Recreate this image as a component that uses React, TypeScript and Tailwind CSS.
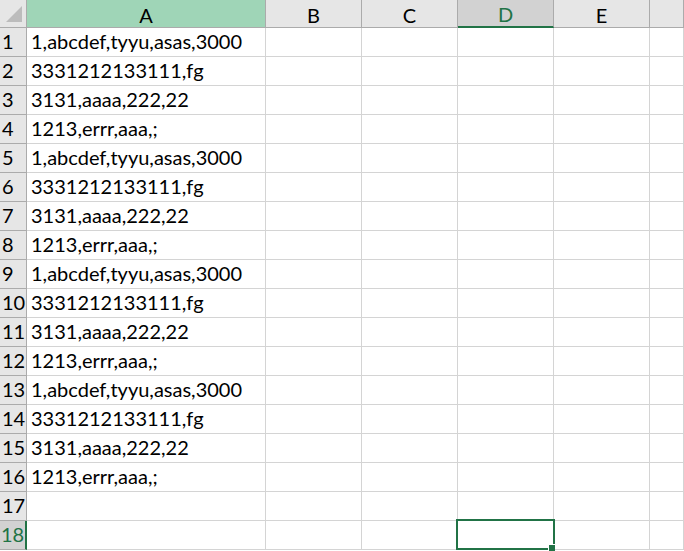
import React from "react";

const lines = ["1,abcdef,tyyu,asas,3000", "3331212133111,fg", "3131,aaaa,222,22", "1213,errr,aaa,;"];
const rows: string[] = [];
for (let i = 0; i < 16; i++) rows.push(lines[i % 4]);
rows.push("", "");

const cols = ["B", "C", "D", "E", ""];

export default function App() {
    return (
        <div className="w-[684px] h-[551px] overflow-hidden bg-white text-black" style={{ fontFamily: "Lato, 'Open Sans', sans-serif" }}>
            <div className="grid grid-cols-[27px_239px_96px_96px_96px_96px_1fr] grid-rows-[28px] auto-rows-[29px]">
                {/* header row */}
                <div className="relative bg-[#e6e6e6] border-r border-b border-[#ababab]">
                    <svg className="absolute left-[6px] top-[6px]" width="16" height="16" viewBox="0 0 16 16">
                        <polygon points="16,0 16,16 0,16" fill="#bcbcbc" />
                    </svg>
                </div>
                <div className="bg-[#9fd5b7] border-r border-b border-[#ababab] flex items-center justify-center text-[20px] pt-[2px]">A</div>
                {cols.map((c) =>
                    c === "D" ? (
                        <div key={c} className="bg-[#d2d2d2] border-r border-[#ababab] border-b-2 border-b-[#217346] flex items-center justify-center text-[20px] text-[#217346] pt-[2px]">
                            {c}
                        </div>
                    ) : (
                        <div key={c || "f"} className="bg-[#e6e6e6] border-r border-b border-[#ababab] flex items-center justify-center text-[20px] pt-[2px]">
                            {c}
                        </div>
                    )
                )}
                {rows.map((txt, i) => {
                    const n = i + 1;
                    const sel = n === 18;
                    return (
                        <React.Fragment key={n}>
                            <div
                                className={
                                    sel
                                        ? "bg-[#d2d2d2] border-r-2 border-r-[#217346] border-b border-b-[#ababab] text-[#217346] text-[20px] leading-none flex items-end pl-[1px] pb-[5px]"
                                        : "bg-[#e6e6e6] border-r border-b border-[#ababab] text-[20px] leading-none flex items-end pl-[2px] pb-[5px]"
                                }
                            >
                                {n}
                            </div>
                            <div className="border-r border-b border-[#d4d4d4] text-[20px] leading-none flex items-end pl-[4px] pb-[5px] whitespace-nowrap">{txt}</div>
                            {cols.map((c) => (
                                <div key={c || "f"} className={sel && c === "D" ? "relative z-10 border-r border-b border-[#d4d4d4]" : "border-r border-b border-[#d4d4d4]"}>
                                    {sel && c === "D" && (
                                        <div className="absolute -left-[2px] -top-[2px] -right-[2px] -bottom-[1px] border-2 border-[#217346]">
                                            <div className="absolute -right-[2px] -bottom-[3px] w-[7px] h-[7px] bg-[#217346] border-l border-t border-white" />
                                        </div>
                                    )}
                                </div>
                            ))}
                        </React.Fragment>
                    );
                })}
            </div>
        </div>
    );
}
